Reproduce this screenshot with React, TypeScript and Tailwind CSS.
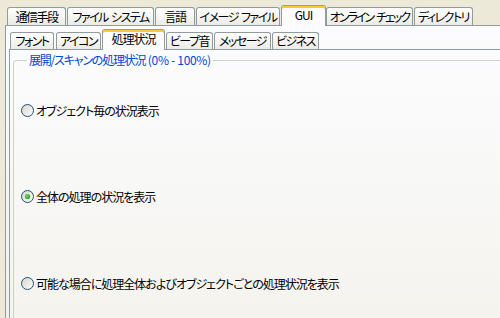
const outerTabs = [
  { label: '通信手段', cls: 'w-[59px] ml-0 tracking-[-1.5px]' },
  { label: 'ファイル システム', cls: 'w-[87px] ml-[1px] tracking-[-1.5px]' },
  { label: '言語', cls: 'w-[40px] ml-[1px] tracking-[-1.5px]' },
  { label: 'イメージ ファイル', cls: 'w-[84px] ml-[1px] tracking-[-1.5px]' },
  { label: 'GUI', cls: 'w-[45px] ml-[1px] tracking-[-1px]', active: true },
  { label: 'オンライン チェック', cls: 'w-[87px] ml-0 tracking-[-2px]' },
  { label: 'ディレクトリ', cls: 'w-[59px] ml-[1px] tracking-[-1.5px]' },
];

const innerTabs = [
  { label: 'フォント', cls: 'w-[44px] ml-0 tracking-[-1.5px]' },
  { label: 'アイコン', cls: 'w-[45px] ml-[2px] tracking-[-1.5px]' },
  { label: '処理状況', cls: 'w-[63px] ml-[1px] tracking-[-1px]', active: true },
  { label: 'ビープ音', cls: 'w-[47px] ml-[1px] tracking-[-1.5px]' },
  { label: 'メッセージ', cls: 'w-[57px] ml-[1px] tracking-[-1.5px]' },
  { label: 'ビジネス', cls: 'w-[47px] ml-[1px] tracking-[-1.5px]' },
];

function Tab({ label, cls, active, short }: { label: string; cls: string; active?: boolean; short: string }) {
  if (active) {
    return (
      <div
        className={`${cls} relative z-10 -mb-px h-[21px] flex justify-center pt-[2px] leading-[14px] rounded-t-[3px] border border-b-0 border-[#919B9C] border-t-[#E68B2C] bg-[#FCFCFE] shadow-[inset_0_2px_0_#FFC83C]`}
      >
        {label}
      </div>
    );
  }
  // words kept apart by a fixed gap, the squeezed tracking eats the space glyph
  return (
    <div
      className={`${cls} ${short} flex justify-center items-center gap-[3px] leading-[14px] rounded-t-[3px] border border-b-0 border-[#919B9C] bg-linear-to-b from-white to-[#ECEBE6] whitespace-nowrap`}
    >
      {label.split(' ').map((w) => (
        <span key={w}>{w}</span>
      ))}
    </div>
  );
}

function Radio({ checked }: { checked?: boolean }) {
  return (
    <svg width="13" height="13" viewBox="0 0 13 13" className="shrink-0">
      <defs>
        <linearGradient id="radioFill" x1="0" y1="0" x2="1" y2="1">
          <stop offset="0" stopColor="#D6D2C4" />
          <stop offset="1" stopColor="#FFFFFF" />
        </linearGradient>
        <radialGradient id="radioDot" cx="0.4" cy="0.4" r="0.6">
          <stop offset="0" stopColor="#7CE06E" />
          <stop offset="1" stopColor="#21A121" />
        </radialGradient>
      </defs>
      <circle cx="6.5" cy="6.5" r="6" fill="url(#radioFill)" stroke="#1C5180" />
      {checked && <circle cx="6.5" cy="6.5" r="2.6" fill="url(#radioDot)" />}
    </svg>
  );
}

function Option({ text, checked, cls }: { text: string; checked?: boolean; cls: string }) {
  return (
    <label className={`${cls} flex items-center gap-[2px] h-[13px] leading-[14px] tracking-[-1px] whitespace-nowrap`}>
      <Radio checked={checked} />
      <span>{text}</span>
    </label>
  );
}

export default function App() {
  return (
    <div className="w-[500px] h-[318px] overflow-hidden bg-[#ECE9D8] pl-[5px] pt-[5px] flex flex-col text-[12px] text-black font-['Noto_Sans_CJK_JP',sans-serif] [font-feature-settings:'palt']">
      <div className="flex items-end h-[20px] pl-[2px] shrink-0">
        {outerTabs.map((t) => (
          <Tab key={t.label} {...t} short="h-[18px]" />
        ))}
      </div>

      <div className="flex-1 w-[520px] border-l border-t border-[#919B9C] bg-linear-to-b from-[#FCFCFE] to-[#F1EFE8] pl-[3px] pt-[3px] flex flex-col">
        <div className="flex items-end h-[20px] pl-[1px] shrink-0">
          {innerTabs.map((t) => (
            <Tab key={t.label} {...t} short="h-[17px]" />
          ))}
        </div>

        <div className="flex-1 border-l border-t border-[#919B9C] bg-linear-to-b from-[#FCFCFE] to-[#F3F2EC] pl-[3px] pt-[3px]">
          <fieldset className="w-[520px] h-[300px] border border-[#D0D0BF] rounded-[3px] pl-[7px] pt-[37px]">
            <legend className="ml-[6px] px-[2px] mr-[2px] leading-[14px] text-[#0046D5] whitespace-pre">
              <span className="tracking-[-1.2px]">展開/スキャンの処理状況</span>
              <span className="tracking-[-0.3px]"> (0% - 100%)</span>
            </legend>
            <Option cls="mt-0" text="オブジェクト毎の状況表示" />
            <Option cls="mt-[73px]" text="全体の処理の状況を表示" checked />
            <Option cls="mt-[74px]" text="可能な場合に処理全体およびオブジェクトごとの処理状況を表示" />
          </fieldset>
        </div>
      </div>
    </div>
  );
}
